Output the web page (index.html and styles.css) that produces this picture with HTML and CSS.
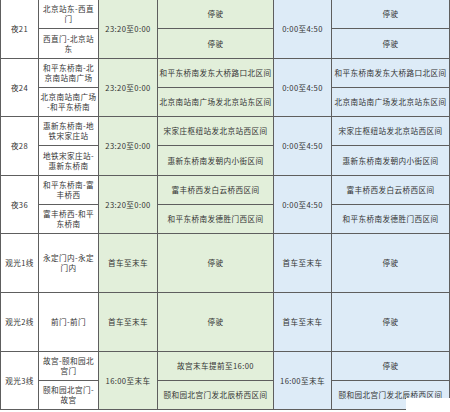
FILE: index.html
```html
<!DOCTYPE html>
<html lang="zh">
<head>
<meta charset="utf-8">
<link rel="stylesheet" href="styles.css">
</head>
<body>
<div class="wrap">
<table class="grid">
  <colgroup>
    <col class="c1"><col class="c2"><col class="c3"><col class="c4"><col class="c5"><col class="c6">
  </colgroup>
  <tbody>
    <tr class="h29">
      <td rowspan="2" class="w">夜21</td>
      <td class="w">北京站东-西直<br>门</td>
      <td rowspan="2" class="g">23:20至0:00</td>
      <td class="g">停驶</td>
      <td rowspan="2" class="b">0:00至4:50</td>
      <td class="b">停驶</td>
    </tr>
    <tr class="h30">
      <td class="w">西直门-北京站<br>东</td>
      <td class="g">停驶</td>
      <td class="b">停驶</td>
    </tr>
    <tr class="h29">
      <td rowspan="2" class="w">夜24</td>
      <td class="w">和平东桥南-北<br>京南站南广场</td>
      <td rowspan="2" class="g">23:20至0:00</td>
      <td class="g">和平东桥南发东大桥路口北区间</td>
      <td rowspan="2" class="b">0:00至4:50</td>
      <td class="b">和平东桥南发东大桥路口北区间</td>
    </tr>
    <tr class="h29">
      <td class="w">北京南站南广场<br>-和平东桥南</td>
      <td class="g">北京南站南广场发北京站东区间</td>
      <td class="b">北京南站南广场发北京站东区间</td>
    </tr>
    <tr class="h29">
      <td rowspan="2" class="w">夜28</td>
      <td class="w">惠新东桥南-地<br>铁宋家庄站</td>
      <td rowspan="2" class="g">23:20至0:00</td>
      <td class="g">宋家庄枢纽站发北京站西区间</td>
      <td rowspan="2" class="b">0:00至4:50</td>
      <td class="b">宋家庄枢纽站发北京站西区间</td>
    </tr>
    <tr class="h30">
      <td class="w">地铁宋家庄站-<br>惠新东桥南</td>
      <td class="g">惠新东桥南发朝内小街区间</td>
      <td class="b">惠新东桥南发朝内小街区间</td>
    </tr>
    <tr class="h29">
      <td rowspan="2" class="w">夜36</td>
      <td class="w">和平东桥南-富<br>丰桥西</td>
      <td rowspan="2" class="g">23:20至0:00</td>
      <td class="g">富丰桥西发白云桥西区间</td>
      <td rowspan="2" class="b">0:00至4:50</td>
      <td class="b">富丰桥西发白云桥西区间</td>
    </tr>
    <tr class="h29">
      <td class="w">富丰桥西-和平<br>东桥南</td>
      <td class="g">和平东桥南发德胜门西区间</td>
      <td class="b">和平东桥南发德胜门西区间</td>
    </tr>
    <tr class="h59">
      <td class="w">观光1线</td>
      <td class="w">永定门内-永定<br>门内</td>
      <td class="g">首车至末车</td>
      <td class="g">停驶</td>
      <td class="b">首车至末车</td>
      <td class="b">停驶</td>
    </tr>
    <tr class="h59">
      <td class="w">观光2线</td>
      <td class="w">前门-前门</td>
      <td class="g">首车至末车</td>
      <td class="g">停驶</td>
      <td class="b">首车至末车</td>
      <td class="b">停驶</td>
    </tr>
    <tr class="h29">
      <td rowspan="2" class="w">观光3线</td>
      <td class="w">故宫-颐和园北<br>宫门</td>
      <td rowspan="2" class="g">16:00至末车</td>
      <td class="g">故宫末车提前至16:00</td>
      <td rowspan="2" class="b">16:00至末车</td>
      <td class="b">停驶</td>
    </tr>
    <tr class="h29">
      <td class="w">颐和园北宫门-<br>故宫</td>
      <td class="g">颐和园北宫门发北辰桥西区间</td>
      <td class="b">颐和园北宫门发北辰桥西区间</td>
    </tr>
  </tbody>
</table>
<div class="mask"></div>
</div>
</body>
</html>
```
FILE: styles.css
```css
html, body {
  margin: 0;
  padding: 0;
  background: #ffffff;
}
.wrap {
  position: relative;
  width: 450px;
  height: 412px;
  overflow: hidden;
}
.grid {
  border-collapse: collapse;
  table-layout: fixed;
  width: 449px;
  margin-top: -1px;
  font-family: "Noto Sans CJK SC", "Noto Sans", sans-serif;
  font-size: 7.6px;
  line-height: 10px;
  letter-spacing: 0.4px;
  color: #333333;
}
.c1 { width: 38px; }
.c2 { width: 60px; }
.c3 { width: 59px; }
.c4 { width: 116px; }
.c5 { width: 58px; }
.c6 { width: 118px; }
.grid td {
  border: 1px solid #5e5e5e;
  padding: 0 1px;
  text-align: center;
  vertical-align: middle;
  white-space: nowrap;
  overflow: hidden;
}
.h29 { height: 29px; }
.h30 { height: 30px; }
.h59 { height: 59px; }
.w { background: #ffffff; }
.g { background: #e2efda; }
.b { background: #ddebf7; }
.mask {
  position: absolute;
  left: 406px;
  top: 398px;
  width: 44px;
  height: 14px;
  background: #ffffff;
}
```
